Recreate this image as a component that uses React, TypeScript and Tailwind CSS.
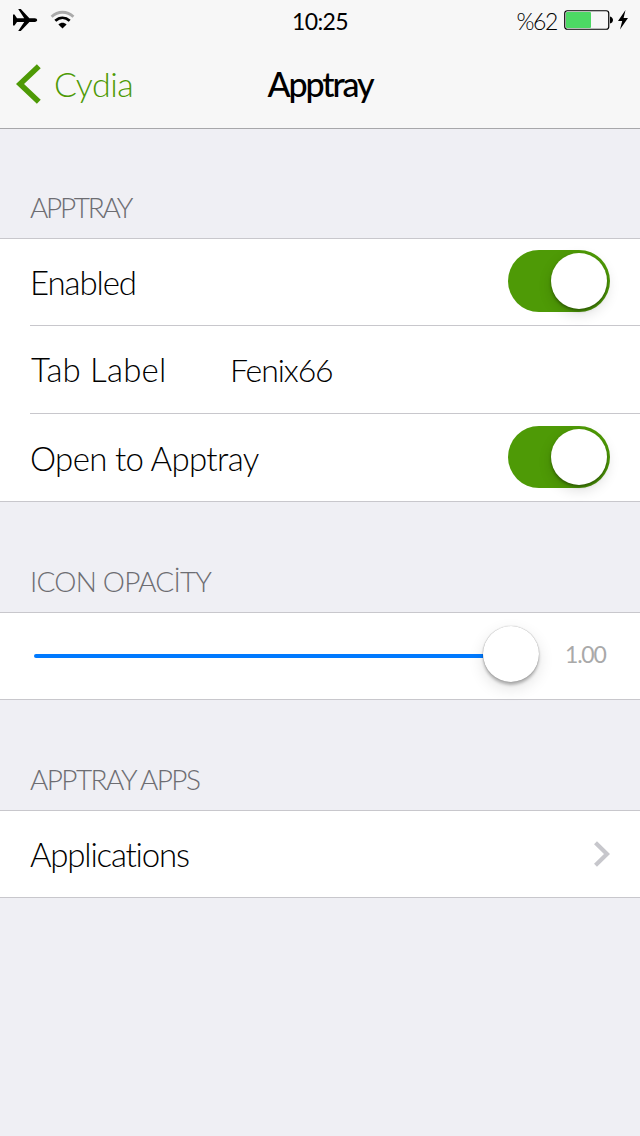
import type { ReactNode } from "react";

function StatusBar() {
  return (
    <div className="flex h-10 items-center text-black">
      <div className="flex w-[213px] items-center pl-3">
        {/* Airplane mode */}
        <svg className="h-6 w-[26px]" viewBox="0 0 26 24" fill="currentColor">
          <path d="M1 6.5h1.5L5 10.2h7.2L6.2 1h2.6l8.6 9.2h5.4c1.4 0 2.4.8 2.4 1.9s-1 1.9-2.4 1.9h-5.4L8.8 23H6.2L12.2 14H5l-2.5 3.5H1z" />
        </svg>
        {/* Wi-Fi */}
        <svg className="ml-3 h-5 w-[26px]" viewBox="0 0 26 20" fill="none">
          <path d="M1.6 6.8C8 .7 17 .7 23.4 6.8" stroke="#aaaaaa" strokeWidth="2.8" />
          <path d="M5.3 10.8c4.4-4 10-4 14.4 0" stroke="currentColor" strokeWidth="2.8" />
          <path d="M8.4 14.4c2.4-2.2 5.8-2.2 8.2 0L12.5 18.6z" fill="currentColor" />
        </svg>
      </div>
      <div className="flex-1 pt-0.5 text-center text-[23px] leading-none tracking-[-0.6px]">
        10:25
      </div>
      <div className="flex w-[213px] items-center justify-end pr-[11px]">
        <span className="pt-0.5 text-[23px] leading-none font-light tracking-[-1.4px]">%62</span>
        <svg className="ml-[7px] h-5 w-[50px]" viewBox="0 0 50 20">
          <rect x=".75" y=".75" width="44" height="18.5" rx="2.5" fill="none" stroke="black" strokeWidth="1.2" />
          <rect x="2" y="2" width="25" height="16" rx="1" fill="#4cd964" />
          <path d="M46 6.5c4 1 4 6 0 7z" fill="black" />
        </svg>
        <svg className="ml-[3px] h-5 w-3" viewBox="0 0 12 20" fill="currentColor">
          <path d="M8.5 0L1 11h4.2L3 19.5 11 8H6.6z" />
        </svg>
      </div>
    </div>
  );
}

function Toggle() {
  return (
    <div className="mb-0.5 flex h-[62px] w-[102px] items-center justify-end rounded-full bg-[#4e9a06] pr-[3px]">
      <div className="size-14 rounded-full bg-white shadow-[0_5px_14px_rgba(0,0,0,0.14),0_2px_3px_rgba(0,0,0,0.35)]" />
    </div>
  );
}

function SectionLabel({ children }: { children: ReactNode }) {
  return (
    <h2 className="pl-[30px] text-[28px] leading-8 font-light text-[#6d6d72]">
      {children}
    </h2>
  );
}

export default function App() {
  return (
    <div className="h-[1136px] w-[640px] overflow-hidden bg-[#efeff4] font-['Lato',sans-serif] text-black">
      <header className="h-[129px] border-b border-[#a7a7aa] bg-[#f7f7f7]">
        <StatusBar />
        <div className="flex h-[88px] items-center">
          <div className="flex w-[213px] items-center pl-4 text-[#4e9a06]">
            <svg className="h-10 w-[25px]" viewBox="0 0 25 40" fill="none">
              <path d="M22.8 2.2L4 20l18.8 17.8" stroke="currentColor" strokeWidth="5.6" />
            </svg>
            <span className="ml-[13px] text-[34px] leading-none font-light tracking-[-0.5px]">Cydia</span>
          </div>
          <h1 className="flex-1 text-center text-[34px] leading-none font-medium tracking-[-2.1px]">
            Apptray
          </h1>
          <div className="w-[213px]" />
        </div>
      </header>

      <main>
        {/* General */}
        <div className="h-[109px] pt-[62px]">
          <SectionLabel>
            <span className="tracking-[-2.3px]">APPTRAY</span>
          </SectionLabel>
        </div>
        <section className="border-y border-[#c8c7cc] bg-white pl-[30px] text-[33px] font-light">
          <div className="flex h-[87px] items-center justify-between border-b border-[#c8c7cc] pr-[30px]">
            <span className="pt-0.5 tracking-[-1.1px]">Enabled</span>
            <Toggle />
          </div>
          <div className="flex h-[88px] items-center border-b border-[#c8c7cc]">
            <span className="w-[200px] pl-px tracking-[0.2px]">Tab Label</span>
            <span className="text-[32px] tracking-[-1.1px]">Fenix66</span>
          </div>
          <div className="flex h-[87px] items-center justify-between pr-[30px]">
            <span className="pt-0.5 tracking-[-0.65px]">Open to Apptray</span>
            <Toggle />
          </div>
        </section>

        {/* Opacity slider */}
        <div className="h-[110px] pt-[63px]">
          <SectionLabel>
            <span className="tracking-[-0.8px]">ICON OPACİTY</span>
          </SectionLabel>
        </div>
        <section className="flex h-[88px] items-center border-y border-[#c8c7cc] bg-white pl-[34px]">
          <div className="h-1 w-[449px] rounded-l-full bg-[#007aff]" />
          <div className="mb-1 size-14 rounded-full bg-white shadow-[0_0_1px_rgba(0,0,0,0.45),0_3px_3px_rgba(0,0,0,0.25),0_6px_16px_rgba(0,0,0,0.12)]" />
          <span className="mb-1 ml-[26px] text-[23px] tracking-[-1.2px] text-[#a9a9a9]">1.00</span>
        </section>

        {/* Applications */}
        <div className="h-[110px] pt-[63px]">
          <SectionLabel>
            <span className="tracking-[-1.6px]">APPTRAY APPS</span>
          </SectionLabel>
        </div>
        <section className="flex h-[88px] items-center justify-between border-y border-[#c8c7cc] bg-white pr-[30px] pl-[30px] text-[33px] font-light">
          <span className="pt-0.5 tracking-[-1.2px]">Applications</span>
          <svg className="h-[26px] w-4" viewBox="0 0 16 26" fill="none">
            <path d="M1.5 1.8L13 13 1.5 24.2" stroke="#c7c7cc" strokeWidth="4.2" />
          </svg>
        </section>
      </main>
    </div>
  );
}
